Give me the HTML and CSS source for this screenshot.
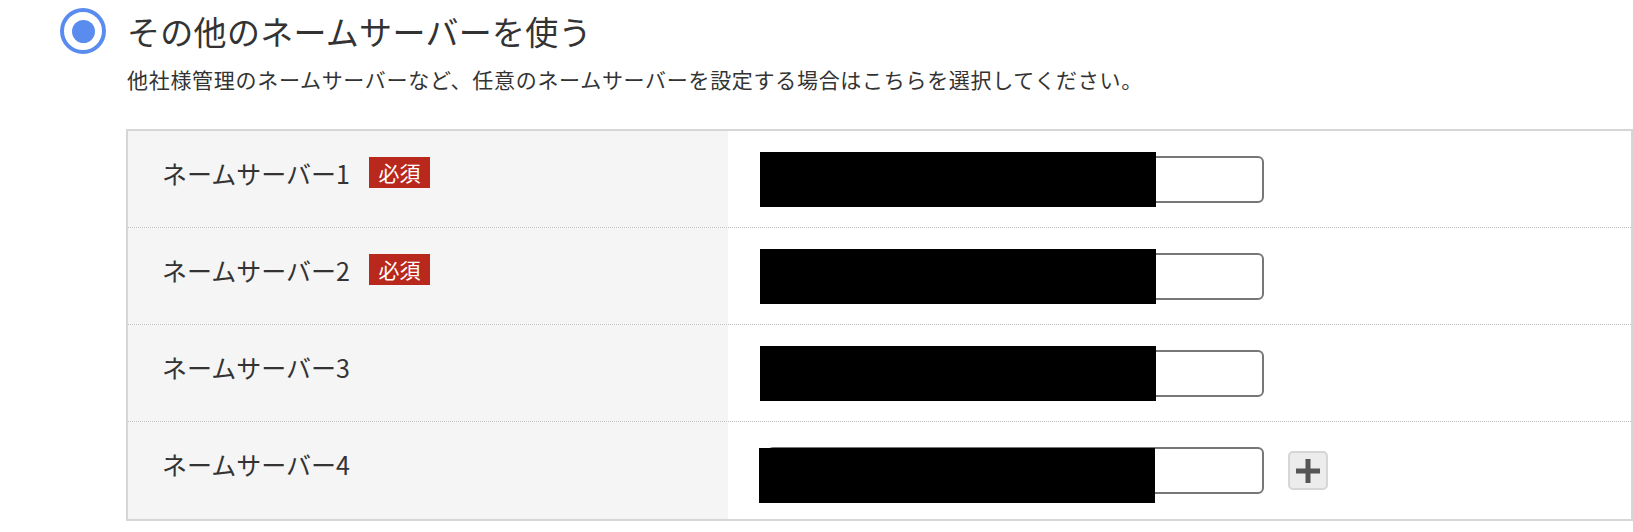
FILE: index.html
```html
<!DOCTYPE html>
<html lang="ja">
<head>
  <meta charset="UTF-8" />
  <meta name="viewport" content="width=device-width, initial-scale=1.0" />
  <title>ネームサーバー設定</title>
  <link rel="stylesheet" href="styles.css">
</head>
<body>
  <!-- その他のネームサーバー -->
  <div class="option">
    <label class="option-head">
      <span class="radio"><span class="radio-dot"></span></span>
      <span class="option-title">その他のネームサーバーを使う</span>
    </label>
    <p class="option-desc">他社様管理のネームサーバーなど、任意のネームサーバーを設定する場合はこちらを選択してください。</p>
  </div>

  <div class="ns-table">
    <div class="ns-row">
      <div class="ns-label">ネームサーバー1<span class="required">必須</span></div>
      <div class="ns-value">
        <div class="field">
          <input type="text" class="ns-input">
          <span class="redact"></span>
        </div>
      </div>
    </div>
    <div class="ns-row">
      <div class="ns-label">ネームサーバー2<span class="required">必須</span></div>
      <div class="ns-value">
        <div class="field">
          <input type="text" class="ns-input">
          <span class="redact"></span>
        </div>
      </div>
    </div>
    <div class="ns-row">
      <div class="ns-label">ネームサーバー3</div>
      <div class="ns-value">
        <div class="field">
          <input type="text" class="ns-input">
          <span class="redact"></span>
        </div>
      </div>
    </div>
    <div class="ns-row">
      <div class="ns-label">ネームサーバー4</div>
      <div class="ns-value">
        <div class="field">
          <input type="text" class="ns-input">
          <span class="redact redact-low"></span>
        </div>
        <button type="button" class="add-btn" aria-label="追加">
          <svg width="24" height="24" viewBox="0 0 24 24"><rect x="9.5" y="0" width="5" height="24" fill="#555"/><rect x="0" y="9.5" width="24" height="5" fill="#555"/></svg>
        </button>
      </div>
    </div>
  </div>
</body>
</html>
```

FILE: styles.css
```css
/* ベース */
body {
  margin: 0;
  background: #fff;
  color: #333;
  font-family: "Noto Sans CJK JP", "Noto Sans", sans-serif;
}

/* ラジオと見出し */
.option {
  padding-top: 8px;
}
.option-head {
  display: flex;
  align-items: center;
  gap: 21px;
  padding-left: 60px;
}
.radio {
  width: 46px;
  height: 46px;
  box-sizing: border-box;
  border: 4.5px solid #5a8cf0;
  border-radius: 50%;
  display: flex;
  align-items: center;
  justify-content: center;
}
.radio-dot {
  width: 23px;
  height: 23px;
  border-radius: 50%;
  background: #5a8cf0;
}
.option-title {
  font-size: 33px;
  line-height: 46px;
  letter-spacing: 0.3px;
}
.option-desc {
  margin: 10px 0 0;
  padding-left: 127px;
  font-size: 21px;
  line-height: 30px;
  letter-spacing: 0.7px;
}

/* テーブル */
.ns-table {
  margin: 35px 0 0 126px;
  border: 2px solid #d6d6d6;
}
.ns-row {
  display: flex;
  height: 97px;
  box-sizing: border-box;
  border-bottom: 1px dotted #bdbdbd;
}
.ns-row:last-child {
  border-bottom: none;
}
.ns-label {
  width: 600px;
  flex-shrink: 0;
  box-sizing: border-box;
  padding: 0 0 13px 34px;
  background: #f5f5f5;
  display: flex;
  align-items: center;
  font-size: 25px;
}
.required {
  margin-left: 19px;
  width: 61px;
  height: 31px;
  background: #b9281c;
  color: #fff;
  font-size: 21px;
  line-height: 31px;
  text-align: center;
}
.ns-value {
  flex: 1;
  display: flex;
  align-items: center;
  gap: 24px;
  padding-left: 39px;
}
.field {
  position: relative;
}
.ns-input {
  display: block;
  width: 497px;
  height: 47px;
  box-sizing: border-box;
  border: 2px solid #777;
  border-radius: 6px;
  background: #fff;
  font-size: 20px;
}
.redact {
  position: absolute;
  left: -7px;
  top: -4px;
  width: 396px;
  height: 55px;
  background: #000;
}
.redact.redact-low {
  left: -8px;
  top: 1px;
}
.add-btn {
  width: 40px;
  height: 39px;
  box-sizing: border-box;
  border: 2px solid #d6d6d6;
  border-radius: 5px;
  background: #ececec;
  padding: 0;
  display: flex;
  align-items: center;
  justify-content: center;
  cursor: pointer;
}
```
